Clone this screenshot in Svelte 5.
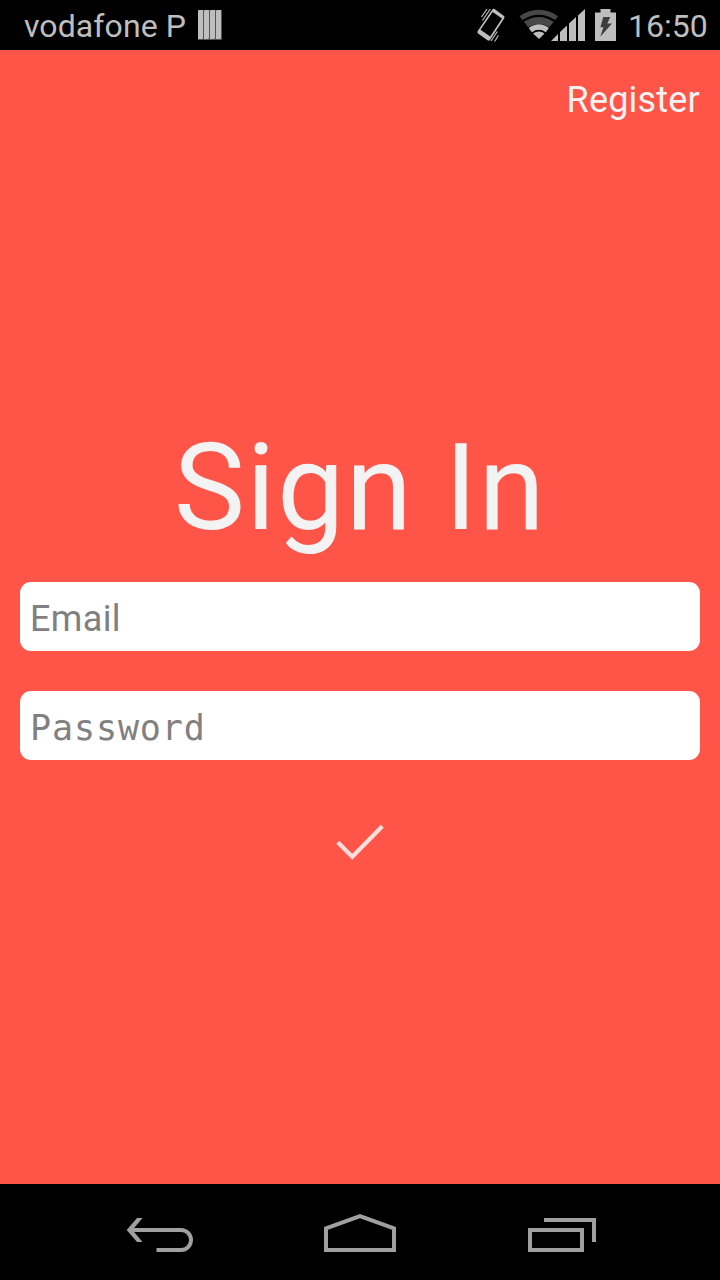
<script>
  let email = $state('');
  let password = $state('');
</script>

<div class="screen">
  <header class="status">
    <span class="carrier">vodafone P</span>
    <svg class="bars" width="26" height="32" viewBox="197 9 26 32">
      <rect x="198" y="10" width="24" height="30" fill="#555" />
      <path fill="#bebebe" d="M198 11l1-1h4v28l-1 1h-4zM204 11l1-1h4v28l-1 1h-4zM210 11l1-1h4v28l-1 1h-4zM216 11l1-1h4v28l-1 1h-4z" />
    </svg>
    <div class="indicators">
      <svg width="30" height="36" viewBox="476 7 30 36">
        <path fill="#bebebe" fill-rule="evenodd" d="M492.5 9.3Q493.3 8.4 494.5 9.1L503.7 15.8Q505 16.8 504.3 18.2L490.2 39.8Q489 41.2 487.5 40.3L478 33.5Q476.8 32.5 477.7 31ZM492.6 12L480.5 29.8L490.2 36.5L502 18.5Z" />
        <path stroke="#bebebe" stroke-width="1.2" fill="none" d="M481.5 17L487 9M482.5 20.5L490.3 9M491 41L497.3 31.5M494.5 41.5L498.5 35.5" />
      </svg>
      <svg class="wifi" width="68" height="34" viewBox="519 8 68 34">
        <path fill="#484848" d="M519.5 16.2Q539 3.5 558 16.2L555.2 20Q539 9.5 522.4 20ZM523.8 21.7Q539 12.2 553.7 21.7L549.4 27.3Q539 20.5 528.2 27.3Z" />
        <path fill="#bebebe" d="M528.7 28Q539 20.6 548.9 28L545.8 32.2Q539 27.5 531.8 32.2ZM533 33.5Q539 29.5 544.6 33.5L539 39Z" />
        <path fill="#bebebe" d="M551 41L558 34V41ZM560 32L567 25.5V41H560ZM569 23.5L576 17V41H569ZM578 15.5L585 9V41H578Z" />
      </svg>
      <svg class="battery" width="22" height="34" viewBox="595 7 22 34">
        <path fill="#bebebe" d="M600.5 8h10v3.5h5.5V40h-21V11.5h5.5Z" />
        <path fill="#3c3c3c" d="M603.2 16H610.2L607.3 22.4H612L600.3 35.8L603.4 26.3H600.4Z" />
      </svg>
      <span class="clock">16:50</span>
    </div>
  </header>

  <main>
    <button class="register">Register</button>
    <form onsubmit={(event) => event.preventDefault()}>
      <h1>Sign In</h1>
      <input bind:value={email} type="text" placeholder="Email" />
      <input class="password" bind:value={password} type="password" placeholder="Password" />
      <button class="submit" aria-label="Submit">
        <svg width="48" height="36" viewBox="336 824 48 36">
          <path d="M337.8 842.3L352.3 856.8L382.3 826.3" fill="none" stroke="#ffdedb" stroke-width="4.2" />
        </svg>
      </button>
    </form>
  </main>

  <nav>
    <svg width="68" height="40" viewBox="126 1214 68 40">
      <path fill="#a0a0a0" d="M137 1218h5.5L132.5 1230L142.5 1242H137L126.7 1230Z" />
      <path d="M131 1230H181A9.8 9.8 0 0 1 181 1250H156.5" fill="none" stroke="#a0a0a0" stroke-width="4" />
    </svg>
    <svg width="74" height="40" viewBox="324 1214 74 40">
      <path d="M326 1228.4L360 1216.2L394 1228.4V1250H326Z" fill="none" stroke="#a0a0a0" stroke-width="4" />
    </svg>
    <svg width="70" height="40" viewBox="527 1214 70 40">
      <path d="M530 1230H582V1250H530ZM544 1220H594V1242" fill="none" stroke="#a0a0a0" stroke-width="4" />
    </svg>
  </nav>
</div>

<style>
  :global(body) {
    margin: 0;
  }
  .screen {
    width: 720px;
    height: 1280px;
    display: flex;
    flex-direction: column;
    background: #ff5548;
    font-family: Roboto, sans-serif;
    overflow: hidden;
  }
  svg {
    display: block;
    flex: none;
  }
  .status {
    height: 50px;
    flex: none;
    background: #000;
    color: #bebebe;
    font-size: 32px;
    line-height: 48px;
    display: flex;
    align-items: center;
    padding: 0 12px 0 24px;
  }
  .carrier {
    width: 173px;
    padding-top: 2px;
    letter-spacing: 0.1px;
    white-space: nowrap;
    flex: none;
  }
  .indicators {
    margin-left: auto;
    display: flex;
    align-items: center;
  }
  .wifi {
    margin-left: 13px;
  }
  .battery {
    margin-left: 8px;
  }
  .clock {
    width: 80px;
    padding-top: 2px;
    margin-left: 11px;
  }
  main {
    flex: 1;
    display: flex;
    flex-direction: column;
    padding: 28px 20px 0;
  }
  button {
    border: 0;
    padding: 0;
    background: none;
    font-family: inherit;
  }
  .register {
    align-self: flex-end;
    color: #f3f3f3;
    font-size: 36px;
    line-height: 44px;
    letter-spacing: 0.2px;
    white-space: nowrap;
  }
  form {
    display: flex;
    flex-direction: column;
    margin-top: 295px;
  }
  h1 {
    margin: 0;
    height: 165px;
    line-height: 143px;
    font-size: 120px;
    font-weight: 400;
    letter-spacing: 1.4px;
    color: #f3f3f3;
    text-align: center;
  }
  input {
    height: 69px;
    box-sizing: border-box;
    border: 0;
    border-radius: 11px;
    padding: 4px 10px 0;
    background: #fff;
    font: 36px Roboto, sans-serif;
    letter-spacing: 0.35px;
    color: #333;
    outline: 0;
  }
  input::placeholder {
    color: #808080;
    opacity: 1;
  }
  .password {
    margin-top: 40px;
  }
  .password::placeholder {
    font-family: "DejaVu Sans Mono", monospace;
    font-size: 35px;
    letter-spacing: 0.9px;
  }
  .submit {
    align-self: center;
    margin-top: 64px;
  }
  nav {
    height: 96px;
    box-sizing: border-box;
    flex: none;
    background: #000;
    display: flex;
    justify-content: space-between;
    align-items: center;
    padding: 4px 123px 0 126px;
  }
</style>
